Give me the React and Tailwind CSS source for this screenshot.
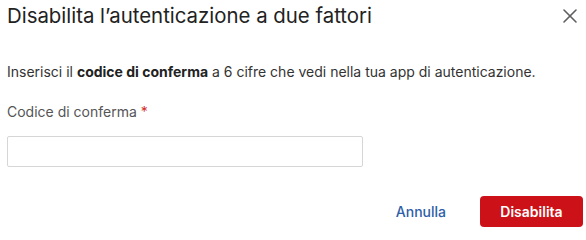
import React from "react";
import { X } from "lucide-react";

const App = () => {
  return (
    <div className="w-[586px] h-[233px] bg-white font-['Inter',sans-serif] flex flex-col pl-[7px] pr-[3px]">
      <div className="flex items-center justify-between h-[32px] pr-[1px]">
        <h1 className="text-[20.4px] leading-[24px] text-[#222] font-normal">Disabilita l’autenticazione a due fattori</h1>
        <X className="w-[24px] h-[24px] text-[#5f5f5f]" strokeWidth={1.6} />
      </div>
      <p className="mt-[30px] text-[14px] leading-[20px] text-[#333]">
        Inserisci il <span className="font-bold text-[#222]">codice di conferma</span> a 6 cifre che vedi nella tua app di autenticazione.
      </p>
      <label className="mt-[20px] text-[14px] leading-[20px] text-[#555]">
        Codice di conferma <span className="text-[#d0312d]">*</span>
      </label>
      <input
        type="text"
        className="mt-[14px] w-[356px] h-[31px] border border-[#d6d6d6] rounded-[2px] px-2 text-sm focus:outline-none"
      />
      <div className="mt-auto mb-[6px] flex items-center justify-end gap-[34px]">
        <button className="text-[14px] font-medium text-[#2d5ea8]">Annulla</button>
        <button className="w-[103px] h-[31px] rounded-[4px] bg-[#cc1118] text-white text-[14px] font-semibold">Disabilita</button>
      </div>
    </div>
  );
};

export default App;
